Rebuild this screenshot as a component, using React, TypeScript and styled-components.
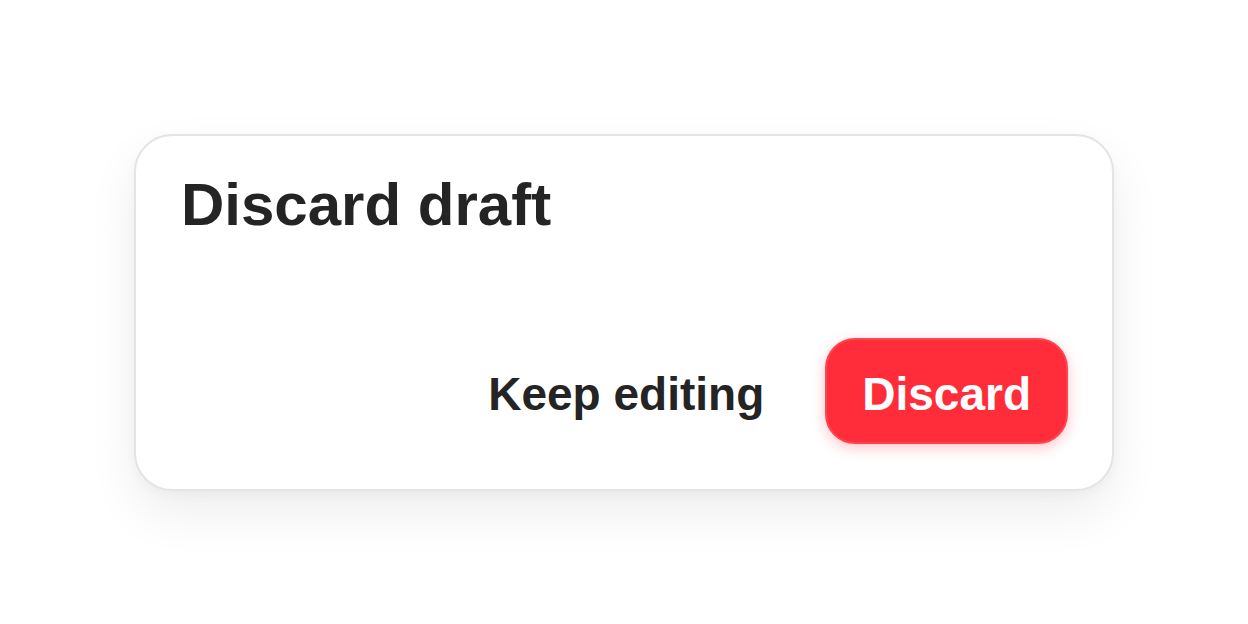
import React from "react";
import styled, { createGlobalStyle } from "styled-components";

const Global = createGlobalStyle`
  html, body { margin: 0; padding: 0; background: #ffffff; }
  body { font-family: "Liberation Sans", Arial, sans-serif; }
  #root { min-height: 100vh; }
`;

const Page = styled.div`
  width: 1248px;
  height: 624px;
  display: flex;
  align-items: center;
  justify-content: center;
  background: #ffffff;
`;

const Card = styled.div`
  box-sizing: border-box;
  width: 980px;
  height: 357px;
  border: 2px solid #e4e4e4;
  border-radius: 38px;
  background: #ffffff;
  box-shadow: 0 22px 50px rgba(0, 0, 0, 0.07), 0 4px 12px rgba(0, 0, 0, 0.03);
  padding: 34px 44px 45px 45px;
  display: flex;
  flex-direction: column;
  justify-content: space-between;
`;

const Title = styled.h2`
  margin: 0;
  font-size: 60px;
  font-weight: 700;
  color: #242424;
  line-height: 69px;
`;

const Actions = styled.div`
  display: flex;
  justify-content: flex-end;
  align-items: center;
  gap: 30px;
`;

const Button = styled.button<{ $variant: "ghost" | "danger" }>`
  box-sizing: border-box;
  height: 106px;
  border-radius: 30px;
  font-family: "Liberation Sans", Arial, sans-serif;
  font-size: 46px;
  font-weight: 700;
  cursor: pointer;
  padding: 6px ${(p) => (p.$variant === "danger" ? "35px" : "31px")} 0;
  border: ${(p) => (p.$variant === "danger" ? "2px solid #ff4450" : "none")};
  background: ${(p) => (p.$variant === "danger" ? "#ff2c3a" : "transparent")};
  color: ${(p) => (p.$variant === "danger" ? "#ffffff" : "#242424")};
  box-shadow: ${(p) =>
    p.$variant === "danger" ? "0 4px 14px rgba(255, 44, 58, 0.28)" : "none"};
`;

export default function App() {
  return (
    <>
      <Global />
      <Page>
        <Card>
          <Title>Discard draft</Title>
          <Actions>
            <Button $variant="ghost">Keep editing</Button>
            <Button $variant="danger">Discard</Button>
          </Actions>
        </Card>
      </Page>
    </>
  );
}
